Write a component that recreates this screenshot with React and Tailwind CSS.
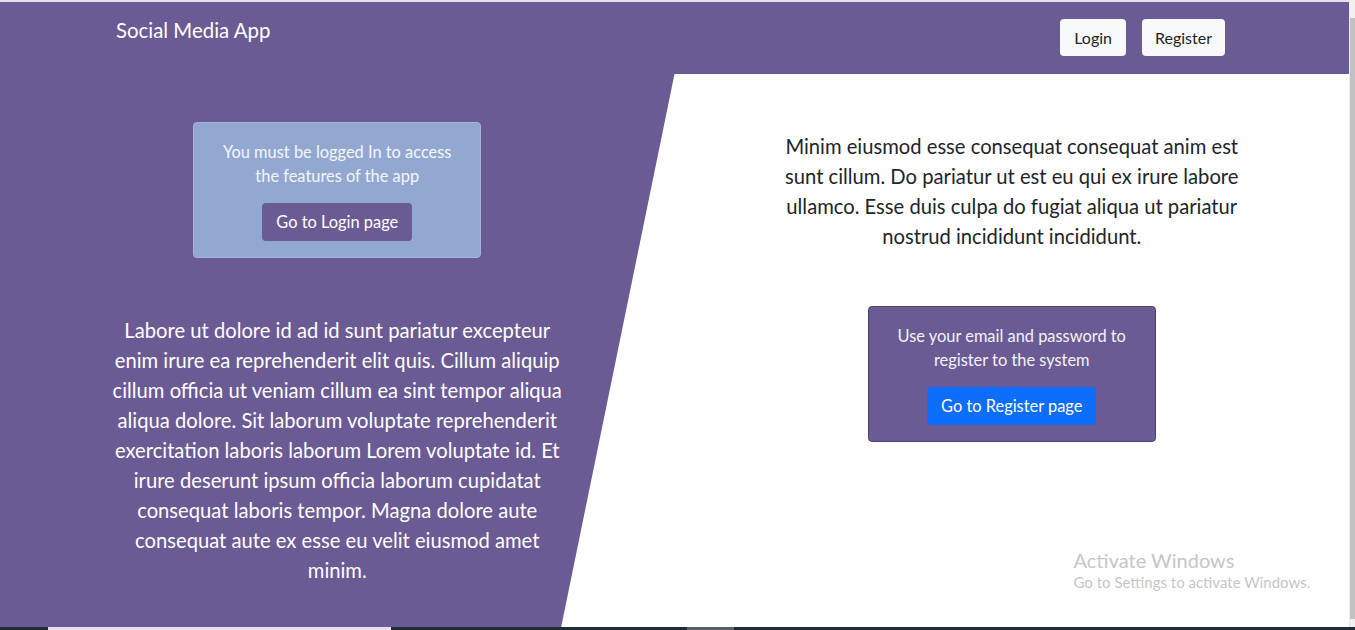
export default function App() {
  const font = { fontFamily: "Lato, 'Noto Sans', sans-serif" };
  return (
    <div className="h-[630px] w-[1355px] overflow-hidden flex flex-col bg-white" style={font}>
      <div className="flex flex-1 min-h-0">
        {/* page */}
        <div className="w-[1349px] flex flex-col border-t-2 border-[#e4e0ec]">
          <nav className="h-[72px] bg-[#6b5b95] flex items-start justify-between pl-[116px] pr-[124px]">
            <a className="text-white text-[20.4px] mt-[15px] leading-[26px]">Social Media App</a>
            <div className="flex gap-4 mt-[17px]">
              <button className="h-[37px] px-[14px] bg-[#f8f9fa] text-[#212529] rounded text-[16px]">Login</button>
              <button className="h-[37px] px-[13px] bg-[#f8f9fa] text-[#212529] rounded text-[16px]">Register</button>
            </div>
          </nav>
          <main className="flex-1 grid grid-cols-2 bg-white">
            <section
              className="bg-[#6b5b95] flex flex-col items-center pt-[48px] [clip-path:polygon(0_0,100%_0,83.2%_100%,0_100%)]"
            >
              <div className="w-[288px] bg-[#92a8d1] border border-[#a3b5da] rounded px-5 pt-[17px] pb-4 flex flex-col items-center text-center">
                <p className="text-[#f4f6fb] text-[16.4px] leading-[24px]">
                  You must be logged In to access the features of the app
                </p>
                <button className="mt-[15px] h-[38px] px-[14px] bg-[#6b5b95] text-white rounded text-[16.4px]">
                  Go to Login page
                </button>
              </div>
              <p className="mt-[57px] w-[462px] text-center text-white text-[20.2px] leading-[30px]">
                Labore ut dolore id ad id sunt pariatur excepteur enim irure ea reprehenderit elit quis. Cillum aliquip cillum officia ut veniam cillum ea sint tempor aliqua aliqua dolore. Sit laborum voluptate reprehenderit exercitation laboris laborum Lorem voluptate id. Et irure deserunt ipsum officia laborum cupidatat consequat laboris tempor. Magna dolore aute consequat aute ex esse eu velit eiusmod amet minim.
              </p>
            </section>
            <section className="relative flex flex-col items-center pt-[57px]">
              <p className="w-[466px] text-center text-[#212529] text-[20.2px] leading-[30px]">
                Minim eiusmod esse consequat consequat anim est sunt cillum. Do pariatur ut est eu qui ex irure labore ullamco. Esse duis culpa do fugiat aliqua ut pariatur nostrud incididunt incididunt.
              </p>
              <div className="mt-[55px] w-[288px] bg-[#6b5b95] border border-[#4d4170] rounded px-5 pt-[17px] pb-4 flex flex-col items-center text-center">
                <p className="text-[#f4f2f8] text-[16.4px] leading-[24px]">
                  Use your email and password to register to the system
                </p>
                <button className="mt-[15px] h-[38px] px-[14px] bg-[#0d6efd] text-white rounded text-[16.4px]">
                  Go to Register page
                </button>
              </div>
              <div className="absolute left-[399px] top-[474px] text-[#c6c6c6] pointer-events-none">
                <div className="text-[20px] leading-[24px]">Activate Windows</div>
                <div className="text-[15px] leading-[20px]">Go to Settings to activate Windows.</div>
              </div>
            </section>
          </main>
        </div>
        {/* scrollbar */}
        <div className="w-[6px] flex border-l border-[#ece9f2]">
          <div className="flex-1 flex flex-col bg-[#f1f1f1]">
            <div className="h-[18px]" />
            <div className="flex-1 bg-[#c2c2c2]" />
            <div className="h-[8px]" />
          </div>
        </div>
      </div>
      {/* taskbar */}
      <div className="h-[3px] flex bg-[#1f2e36]">
        <div className="w-[48px]" />
        <div className="w-[343px] bg-[#e6e0f0]" />
        <div className="w-[296px]" />
        <div className="w-[47px] bg-[#5a6068]" />
      </div>
    </div>
  );
}
